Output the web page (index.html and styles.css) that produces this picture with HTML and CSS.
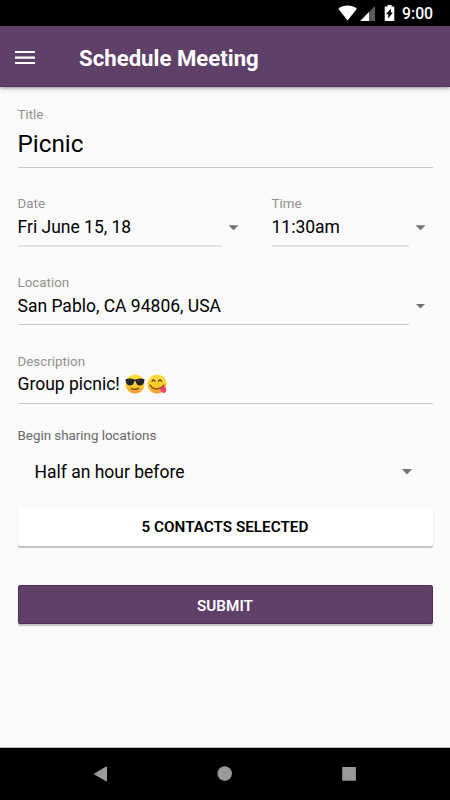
FILE: index.html
```html
<!DOCTYPE html>
<html lang="en">
<head>
<meta charset="utf-8">
<title>Schedule Meeting</title>
<link rel="stylesheet" href="styles.css">
</head>
<body>
<div class="status">
  <svg class="status-icons" width="66" height="26" viewBox="0 0 66 26">
    <path fill="#fff" d="M0.3 8.7C5.5 4.3 13.5 4.3 18.9 8.7L9.6 20.6Z"/>
    <path fill="#5a5a5a" d="M37 6V21H22.2Z"/>
    <path fill="#fff" d="M31 12V21H22.2Z"/>
    <path fill="#fff" d="M47.500 6.500h2V5h4v1.500h2q.8 0 .8.8V20.200q0 .8-.8.8h-8q-.8 0-.8-.8V7.300q0-.8.8-.8z"/>
    <path fill="#000" d="M52.800 8.500v4h2L50.200 18.500v-4.200h-2.100z"/>
  </svg>
  <span class="clock">9:00</span>
</div>
<header class="bar">
  <svg class="menu" width="20" height="14" viewBox="0 0 20 14"><path fill="#fff" d="M0 0h20v2H0zM0 5.500h20v2.200H0zM0 11h20v2H0z"/></svg>
  <h1 class="heading">Schedule Meeting</h1>
</header>
<main class="form">
  <section class="field field-title">
    <div class="label">Title</div>
    <div class="value value-large">Picnic</div>
  </section>
  <div class="row">
    <section class="field date">
      <div class="label">Date</div>
      <div class="select"><div class="value soft">Fri June 15, 18</div><i class="caret"></i></div>
    </section>
    <section class="field time">
      <div class="label">Time</div>
      <div class="select"><div class="value soft">11:30am</div><i class="caret"></i></div>
    </section>
  </div>
  <section class="field location">
    <div class="label">Location</div>
    <div class="select"><div class="value">San Pablo, CA 94806, USA</div><i class="caret"></i></div>
  </section>
  <section class="field description">
    <div class="label">Description</div>
    <div class="value">Group picnic!
      <svg class="emoji" width="42" height="20" viewBox="0 0 42 20">
        <defs><linearGradient id="face" x1="0" y1="0" x2="0" y2="1"><stop offset="0" stop-color="#ffe03d"/><stop offset=".6" stop-color="#fdc92b"/><stop offset="1" stop-color="#f19534"/></linearGradient></defs>
        <circle cx="10" cy="10" r="9.600" fill="url(#face)"/>
        <path fill="#202428" d="M.4 5.200Q5.200 3.700 8.500 5.300Q10 5.900 11.500 5.300Q15 3.700 19.600 5.200L19.200 7.200Q18.600 11.500 14.900 11.500Q11.500 11.500 10.800 7.500Q10 6.700 9.200 7.500Q8.500 11.500 5.100 11.500Q1.500 11.500.8 7.200Z"/>
        <path fill="none" stroke="#6b5b4e" stroke-width=".8" d="M2.500 7l2-1.200M12.500 7l2-1.200"/>
        <path fill="none" stroke="#613a20" stroke-width="1.100" stroke-linecap="round" d="M6.300 14.400Q10 16.500 13.800 14.300"/>
        <circle cx="32" cy="10" r="9.600" fill="url(#face)"/>
        <path fill="none" stroke="#493323" stroke-width="1.300" stroke-linecap="round" d="M27 7.300Q28.500 4.500 30 7.300M33.500 7.300Q35 4.500 36.500 7.300"/>
        <path fill="none" stroke="#613a20" stroke-width="1.200" stroke-linecap="round" d="M25 11Q28 15.500 32.500 15Q36.500 14.500 39 11"/>
        <path fill="#ef4a72" d="M34.500 14.500Q37 13.700 38.500 11.800Q42 14 41.200 17Q40 20 37.600 18.800Q35.500 17.500 34.500 14.500Z"/>
        <path fill="none" stroke="#c92d59" stroke-width=".7" d="M37.200 14l1.800 2.300"/>
      </svg>
    </div>
  </section>
  <section class="sharing">
    <div class="label label-dark">Begin sharing locations</div>
    <div class="spinner"><span>Half an hour before</span><i class="caret caret-wide"></i></div>
  </section>
  <button class="button contacts">5 CONTACTS SELECTED</button>
  <button class="button submit">SUBMIT</button>
</main>
<nav class="nav">
  <svg width="450" height="52" viewBox="0 0 450 52"><g fill="#999"><path d="M93.500 26L106 18.500q1-.5 1 .4V32.900q0 1-1 .4Z"/><circle cx="224.700" cy="25.600" r="7.300"/><rect x="342.200" y="19" width="13.700" height="13.700" rx=".5"/></g></svg>
</nav>
</body>
</html>
```
FILE: styles.css
```css
* { box-sizing: border-box; }
body {
  margin: 0;
  width: 450px;
  height: 800px;
  display: flex;
  flex-direction: column;
  overflow: hidden;
  background: #fafafa;
  color: #000;
  font-family: Roboto, "Liberation Sans", sans-serif;
}
.status {
  height: 26px;
  display: flex;
  align-items: center;
  justify-content: flex-end;
  gap: 6px;
  padding-right: 17px;
  background: #000;
  color: #fff;
}
.status-icons { margin-right: -8px; flex: none; }
.clock { width: 31px; padding-top: 2px; font-size: 15.800px; font-weight: 500; line-height: 26px; white-space: nowrap; }
.bar {
  height: 61px;
  display: flex;
  align-items: center;
  gap: 44px;
  padding: 3px 15px 0;
  background: #5f4069;
  border-bottom: 1px solid #573661;
  box-shadow: 0 1px 4px rgba(0, 0, 0, .45);
}
.heading { margin: 0; color: #fff; font-size: 22.200px; font-weight: 700; line-height: 30px; white-space: nowrap; }
.menu { margin-top: 1px; }
.form { flex: 1; padding: 20px 17.500px 0; }
.label { font-size: 13.350px; line-height: 16px; color: #919191; white-space: nowrap; }
.label-dark { color: #696969; line-height: 17px; }
.value {
  flex: 1;
  height: 34px;
  display: flex;
  align-items: center;
  padding-bottom: 3px;
  border-bottom: 1px solid #c9c9c9;
  font-size: 17.500px;
  white-space: nowrap;
}
.location .value { padding-bottom: 2px; }
.value-large { height: 45px; padding-bottom: 4px; font-size: 24.300px; }
.soft { height: 34.500px; border-bottom: 2px solid #e3e3e3; padding-bottom: 2px; }
.row { display: flex; gap: 26px; margin-top: 28px; }
.date { width: 228px; }
.time { flex: 1; }
.select { display: flex; align-items: center; }
.caret {
  flex: none;
  width: 10px;
  height: 5px;
  margin: 0 7px 3px;
  background: #737373;
  clip-path: polygon(0 0, 100% 0, 50% 100%);
}
.location { margin-top: 28px; }
.description { margin-top: 29px; }
.description .value { padding-bottom: 4px; }
.emoji { margin-left: 5px; flex: none; }
.sharing { margin-top: 23px; }
.spinner {
  display: flex;
  align-items: center;
  justify-content: space-between;
  height: 55px;
  padding: 1px 20px 0 17px;
  font-size: 17.500px;
}
.caret-wide { width: 11px; height: 6px; margin: 0; }
.button {
  display: block;
  width: 415px;
  height: 39px;
  padding: 2px 0 0;
  border: 0;
  border-radius: 2px;
  font: 600 15.250px/37px Roboto, "Liberation Sans", sans-serif;
  text-align: center;
  box-shadow: 0 2px 1px rgba(0, 0, 0, .22), 0 0 1px rgba(0, 0, 0, .12);
}
.contacts { margin-top: 8px; background: #fff; color: #000; }
.submit { margin-top: 39px; background: #5f4069; color: #fff; border: 1px solid #502d5c; line-height: 36px; }
.nav { height: 53px; background: #000; border-top: 1px solid #bbb; }
.nav svg { display: block; }
```
